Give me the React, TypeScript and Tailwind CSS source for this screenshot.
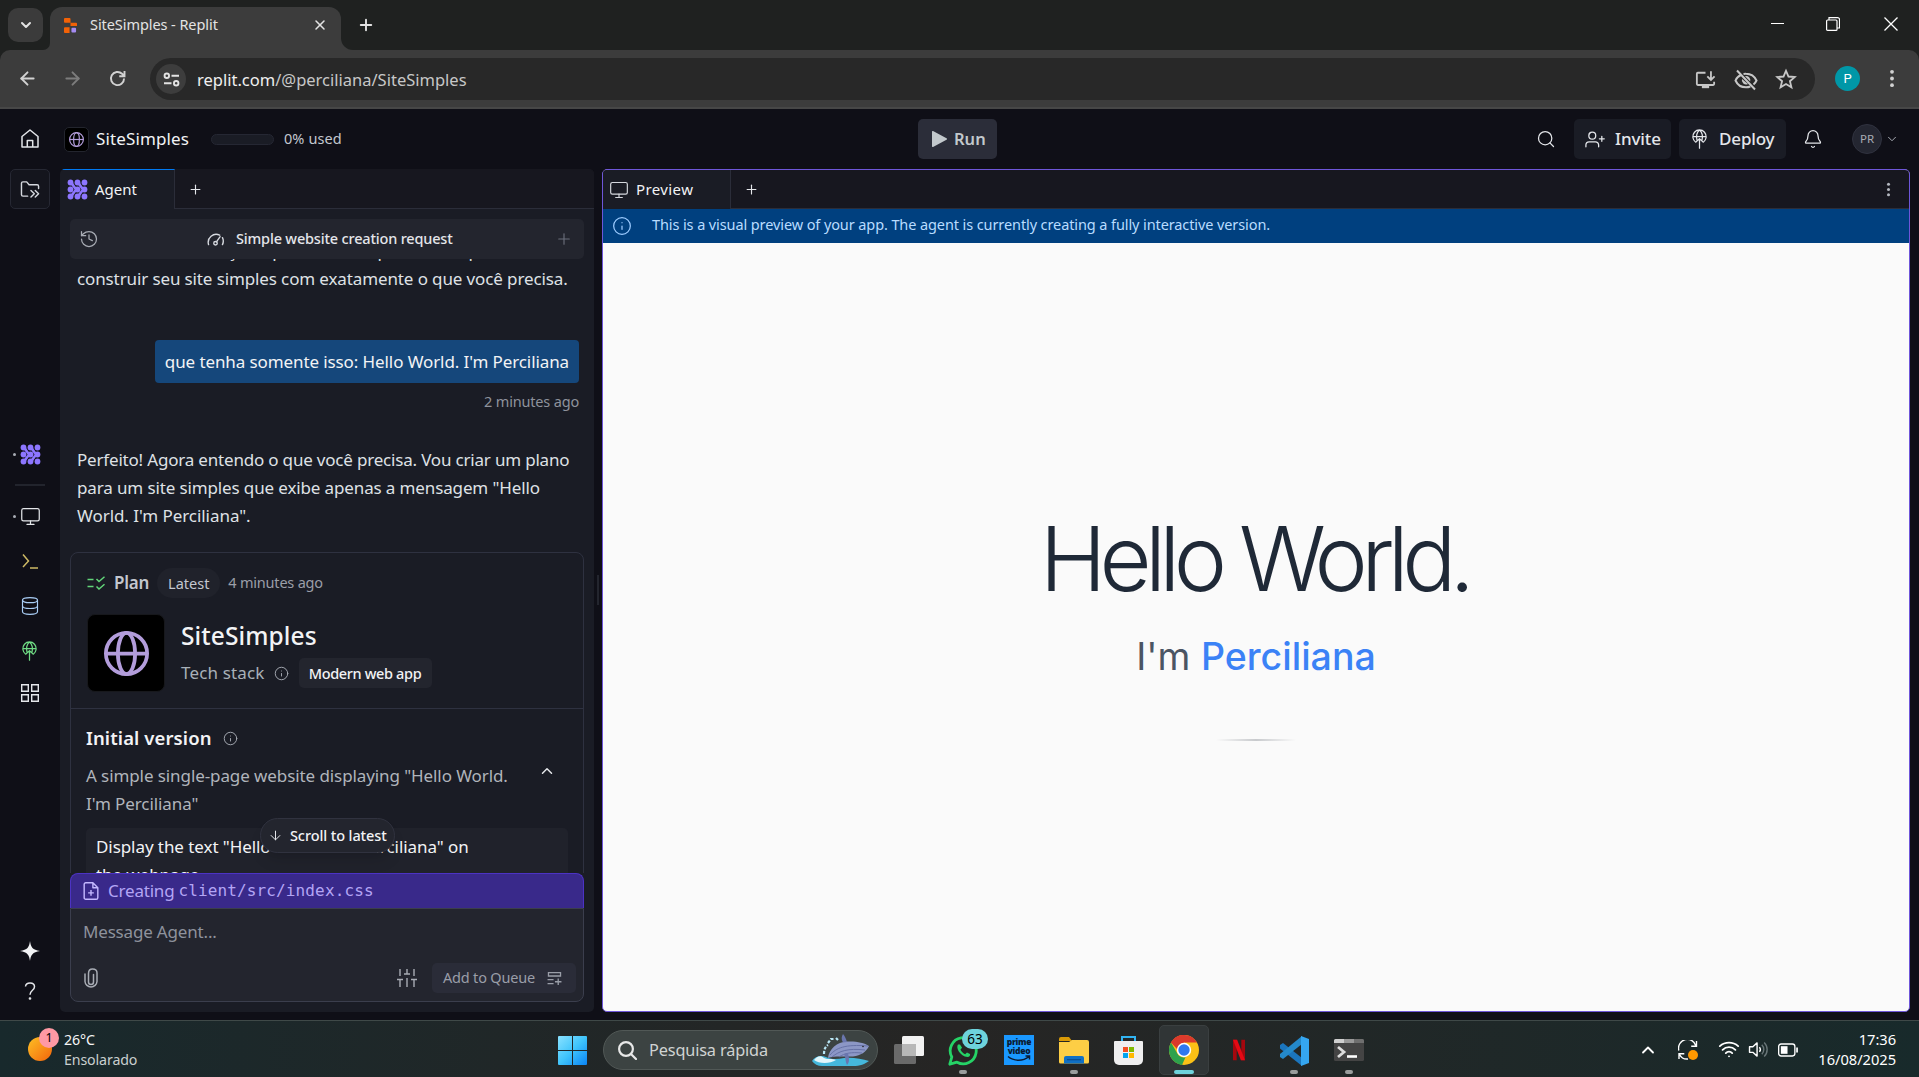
import React from "react";
import {
  ArrowDown,
  ArrowLeft,
  ArrowRight,
  Bell,
  ChevronDown,
  ChevronUp,
  Database,
  History,
  Info,
  Monitor,
  Plus,
  Search,
  Wifi,
  X,
} from "lucide-react";

type P = { className?: string };

function AgentIcon({ className }: P) {
  const pts = [4, 12, 20];
  return (
    <svg viewBox="0 0 24 24" className={className}>
      <g fill="#8d76ff" stroke="#8d76ff">
        {pts.map((x) => pts.map((y) => <circle key={`${x}-${y}`} cx={x} cy={y} r="3.3" stroke="none" />))}
        <path d="M4 4c4 2 3 7 8 8c-5 1-4 6-8 8M12 4c4 2 3 7 8 8c-5 1-4 6-8 8" fill="none" strokeWidth="3" />
      </g>
    </svg>
  );
}

function Globe({ className, w = 2 }: P & { w?: number }) {
  return (
    <svg viewBox="0 0 24 24" className={className} fill="none" stroke="#b39ddb" strokeWidth={w}>
      <circle cx="12" cy="12" r="11" />
      <ellipse cx="12" cy="12" rx="4.6" ry="11" />
      <path d="M1 12h22" />
    </svg>
  );
}

function DeployIcon({ className }: P) {
  return (
    <svg viewBox="0 0 20 24" className={className} fill="none" stroke="currentColor" strokeWidth="1.5" strokeLinecap="round" strokeLinejoin="round">
      <path d="M5.5 15.8A8 8 0 1 1 14.5 15.8M2 9h16M7 13.5C5.6 9 6.8 3.5 10 1.2C13.2 3.5 14.4 9 13 13.5M10 23V12M6 15.5l4-4l4 4" />
    </svg>
  );
}

function HomeIcon({ className }: P) {
  return (
    <svg viewBox="0 0 18 20" className={className} fill="none" stroke="#e4e6ea" strokeWidth="1.5" strokeLinejoin="round">
      <path d="M1 7.5L9 1l8 6.5V18H1zM6.3 18v-6.500h5.400V18" />
    </svg>
  );
}

function FolderIcon({ className }: P) {
  return (
    <svg viewBox="0 0 22 20" className={className} fill="none" stroke="#d5d8de" strokeWidth="1.5" strokeLinejoin="round" strokeLinecap="round">
      <path d="M8 17H3a1.500 1.500 0 0 1-1.500-1.500v-12A1.500 1.500 0 0 1 3 2h4l2.500 3H18a1.500 1.500 0 0 1 1.500 1.500V9M11.500 11l3.500 3.500-3.500 3.500M16 11l3.500 3.500L16 18" />
    </svg>
  );
}

function DotsV({ className }: P) {
  return (
    <svg viewBox="0 0 6 20" className={className} fill="currentColor">
      <circle cx="3" cy="3" r="2" />
      <circle cx="3" cy="10" r="2" />
      <circle cx="3" cy="17" r="2" />
    </svg>
  );
}

function TabStrip() {
  return (
    <div className="flex h-[50px] shrink-0 bg-[#1f2120]">
      <div className="mt-2 ml-2 flex h-[34px] w-[35px] items-center justify-center rounded-[10px] bg-[#3b3b3b]">
        <ChevronDown className="size-[16px] text-[#e3e3e3]" strokeWidth={3} />
      </div>
      <div className="flex w-[7px] items-end bg-[#3c3c3c]">
        <div className="h-[50px] w-[7px] rounded-br-[10px] bg-[#1f2120]" />
      </div>
      <div className="mt-[7px] flex h-[43px] w-[291px] items-center rounded-t-[12px] bg-[#3c3c3c]">
        <svg viewBox="0 0 14 16" className="mt-[-7px] ml-3.5 h-[15px] w-[13px]">
          <path d="M0 1a1 1 0 0 1 1-1h5a1 1 0 0 1 1 1v4H1a1 1 0 0 1-1-1zM7 5h6a1 1 0 0 1 1 1v2.500H7zM0 11a1 1 0 0 1 1-1h5v6H1a1 1 0 0 1-1-1z" fill="#f26207" />
          <rect x="8" y="10.5" width="5" height="5" rx="1" fill="#a48bf2" />
        </svg>
        <div className="mt-[-7px] ml-[13px] text-[14.5px] tracking-[-0.07px] text-[#e3e3e3]">SiteSimples - Replit</div>
        <X className="mt-[-7px] mr-[13px] ml-auto size-[16px] text-[#e3e3e3]" strokeWidth={2.3} />
      </div>
      <div className="w-[12px] bg-[#3c3c3c]">
        <div className="h-[50px] w-[12px] rounded-bl-[12px] bg-[#1f2120]" />
      </div>
      <Plus className="mt-[16px] ml-[4px] size-[18px] text-[#e3e3e3]" strokeWidth={2.5} />
      <div className="ml-auto flex items-start pt-[17px]">
        <div className="mt-[6px] mr-[42px] h-px w-[13px] bg-white" />
        <svg viewBox="0 0 14 14" className="mr-[44px] size-[14px]" fill="none" stroke="#fff" strokeWidth="1.2">
          <rect x="0.6" y="3" width="10.4" height="10.4" rx="1" />
          <path d="M3 3V.6h8.500a2 2 0 0 1 2 2V11H11" />
        </svg>
        <svg viewBox="0 0 14 14" className="mr-[21px] size-[14px]" stroke="#fff" strokeWidth="1.3">
          <path d="M.5.5l13 13M13.5.5l-13 13" />
        </svg>
      </div>
    </div>
  );
}

function Toolbar() {
  return (
    <div className="h-[59px] shrink-0 bg-[#1f2120]">
      <div className="flex h-[59px] items-start rounded-t-[10px] border-b-2 border-[#474747] bg-[#3c3c3c] pt-2">
        <ArrowLeft className="mt-[10px] ml-[17px] size-[21px] text-[#d2d2d2]" strokeWidth={2.2} />
        <ArrowRight className="mt-[10px] ml-[24px] size-[21px] text-[#7c7c7c]" strokeWidth={2.2} />
        <svg viewBox="0 0 24 24" className="mt-[10px] ml-[24px] size-[21px]" fill="none" stroke="#d2d2d2" strokeWidth="2.2">
          <path d="M19.500 12a7.500 7.500 0 1 1-2.300-5.400L20 9.300M20 3.500v6h-6" />
        </svg>
        <div className="ml-[22px] flex h-[42px] w-[1665px] items-center rounded-full bg-[#282828] pr-[18px]">
          <div className="ml-[6px] flex size-[30px] items-center justify-center rounded-full bg-[#3d3d3d]">
            <svg viewBox="0 0 18 16" className="h-[15px] w-[17px]" fill="none" stroke="#e3e3e3" strokeWidth="2">
              <circle cx="4" cy="4" r="2.4" />
              <path d="M9 4h8M1 12h8" />
              <circle cx="14" cy="12" r="2.4" />
            </svg>
          </div>
          <div className="mt-[2px] ml-[11px] text-[16.5px] text-[#c7c7c7]">
            <span className="text-[#f0f0f0]">replit.com</span>/@perciliana/SiteSimples
          </div>
          <svg viewBox="0 0 24 22" className="mt-px mr-[17px] ml-auto h-[20px] w-[23px]" fill="none" stroke="#c7c7c7" strokeWidth="2">
            <path d="M12 3H3.500A1 1 0 0 0 2.500 4v11.500a1 1 0 0 0 1 1h17a1 1 0 0 0 1-1V13M18 1.500v9M14 7l4 4l4-4" />
            <path d="M8 17h8v3H8z" fill="#c7c7c7" stroke="none" />
          </svg>
          <svg viewBox="0 0 24 22" className="mt-px mr-[17px] h-[22px] w-[24px]" fill="none" stroke="#c7c7c7" strokeWidth="2">
            <path d="M7 6C4.500 7 2.500 9 1.500 11.500C3.500 16 7.500 18.300 12 18.300c1.500 0 3-.3 4.300-.8M9.500 4.900A12 12 0 0 1 12 4.700c4.500 0 8.500 2.500 10.500 6.800a11 11 0 0 1-3 4M3 1.500l18 19" />
            <path d="M8 10a4.200 4.200 0 0 0 6 5zM11 7.300a4.200 4.200 0 0 1 5.200 5.200z" fill="#c7c7c7" stroke="none" />
          </svg>
          <svg viewBox="0 0 24 24" className="size-[22px]" fill="none" stroke="#c7c7c7" strokeWidth="2">
            <path d="M12 3l2.700 6.300l6.800.6l-5.200 4.500l1.600 6.700L12 17.500l-5.900 3.600l1.600-6.700l-5.200-4.500l6.800-.6z" />
          </svg>
        </div>
        <div className="mt-[8px] ml-[20px] flex size-[25px] items-center justify-center rounded-full bg-[#0097a7] font-[Roboto] text-[13px] text-white">P</div>
        <DotsV className="mt-[11px] ml-[29px] h-[19px] w-[6px] text-[#d2d2d2]" />
      </div>
    </div>
  );
}

function AppHeader() {
  return (
    <div className="flex h-[60px] shrink-0 items-center">
      <div className="flex w-[918px] items-center">
        <HomeIcon className="ml-[21px] h-[20px] w-[18px]" />
        <div className="ml-[25px] flex size-[25px] items-center justify-center rounded-[5px] border border-[#23252e] bg-black">
          <Globe className="size-[15px]" w={1.9} />
        </div>
        <div className="ml-[7px] text-[17px] tracking-[0.12px] text-[#f2f3f5]">SiteSimples</div>
        <div className="ml-[22px] h-[11px] w-[63px] rounded-full border border-[#252733] bg-[#1a1c25]" />
        <div className="ml-[10px] text-[14.5px] tracking-[0.12px] text-[#c3c7cf]">0% used</div>
      </div>
      <div className="flex h-10 w-[79px] items-center rounded-[5px] bg-[#2b2d39] text-[#c2c8cc]">
        <svg viewBox="0 0 15 16" className="ml-[14px] h-[16px] w-[15px]" fill="currentColor">
          <path d="M0 1a1 1 0 0 1 1.500-.8l13 7a1 1 0 0 1 0 1.600l-13 7A1 1 0 0 1 0 15z" />
        </svg>
        <div className="ml-[7px] text-[16.5px] font-semibold">Run</div>
      </div>
      <div className="ml-auto flex items-center text-[#e4e6ea]">
        <Search className="mr-[18px] size-[20px]" strokeWidth={1.5} />
        <div className="mr-2 flex h-10 w-[97px] items-center rounded-[5px] bg-[#1a1c25]">
          <svg viewBox="0 0 22 18" className="ml-[11px] h-[17px] w-[20px]" fill="none" stroke="currentColor" strokeWidth="1.4" strokeLinecap="round">
            <circle cx="8" cy="4.8" r="3.8" />
            <path d="M1 17v-2a3.500 3.500 0 0 1 3.500-3.500h7A3.500 3.500 0 0 1 15 15v2M18.500 5.500v5.500M15.800 8.200h5.400" />
          </svg>
          <div className="ml-[10px] text-[17px] font-medium tracking-[-0.1px]">Invite</div>
        </div>
        <div className="mr-[17px] flex h-10 w-[107px] items-center rounded-[5px] bg-[#1a1c25]">
          <DeployIcon className="ml-[12px] h-[20px] w-[17px]" />
          <div className="ml-[11px] text-[17px] font-medium tracking-[-0.15px]">Deploy</div>
        </div>
        <Bell className="mr-[29px] size-[20px]" strokeWidth={1.5} />
        <div className="flex size-[30px] items-center justify-center rounded-full border border-[#30323f] bg-[#242631] text-[11.5px] text-[#a8acb4]">PR</div>
        <ChevronDown className="mr-[20px] ml-[3px] size-[14px] text-[#a8acb4]" strokeWidth={1.7} />
      </div>
    </div>
  );
}

function SideRail() {
  return (
    <div className="flex w-[60px] shrink-0 flex-col items-center">
      <div className="flex h-10 w-10 items-center justify-center rounded-[5px] border border-[#262833] bg-[#14151d]">
        <FolderIcon className="h-[19px] w-[21px]" />
      </div>
      <div className="mt-[235px] mr-[6px] flex items-center gap-[4px]">
        <div className="size-[3px] rounded-full bg-[#a8acb4]" />
        <AgentIcon className="size-[21px]" />
      </div>
      <div className="mt-[19px] h-[2px] w-[30px] bg-[#22242d]" />
      <div className="mt-[20px] mr-[6px] flex items-center gap-[4px]">
        <div className="size-[3px] rounded-full bg-[#a8acb4]" />
        <Monitor className="size-[21px] text-[#e4e6ea]" strokeWidth={1.4} />
      </div>
      <svg viewBox="0 0 16 16" className="mt-[26px] mr-px size-[16px]" fill="none" stroke="#cdb965" strokeWidth="1.5">
        <path d="M1 1.500L6.500 8L1 14M8 15h8" />
      </svg>
      <Database className="mt-[27px] size-[20px] text-[#a9cdf5]" strokeWidth={1.4} />
      <DeployIcon className="mt-[25px] mr-px h-[20px] w-[17px] text-[#6fdb84]" />
      <svg viewBox="0 0 18 18" className="mt-[23px] size-[18px]" fill="none" stroke="#e4e6ea" strokeWidth="1.4">
        <path d="M.7.7h6.600v6.600H.7zM10.7.7h6.600v6.600h-6.600zM.7 10.700h6.600v6.600H.7zM10.700 10.700h6.600v6.600h-6.600z" />
      </svg>
      <svg viewBox="0 0 20 20" className="mt-[239px] size-[20px]" fill="#f2f3f5">
        <path d="M10 0c.8 6 2.500 9 10 10c-7.500 1-9.200 4-10 10c-.8-6-2.500-9-10-10C7.500 9 9.200 6 10 0z" />
      </svg>
      <svg viewBox="0 0 12 18" className="mt-[21px] h-[18px] w-[12px]" fill="none" stroke="#e4e6ea" strokeWidth="1.5">
        <path d="M1.500 4.500C1.800 2.300 3.500 1 6 1c2.700 0 4.500 1.500 4.500 3.800C10.500 8.500 6 8 6 12.800" />
        <circle cx="6" cy="16.5" r=".6" fill="#e4e6ea" />
      </svg>
    </div>
  );
}

function PlanCard() {
  return (
    <div className="mt-[22px] h-[400px] rounded-[8px] border border-[#2e3140]">
      <div className="h-[156px] border-b border-[#2e3140] pt-[15px]">
        <div className="flex h-[30px] items-center">
          <svg viewBox="0 0 18 14" className="ml-[16px] h-[14px] w-[18px]" fill="none" stroke="#62d67a" strokeWidth="1.5">
            <path d="M.5 3.500h6M.5 10.500h6M9.500 3l2.500 2.500L17.500.8M9.500 10.500l2.500 2.500l5.500-4.700" />
          </svg>
          <div className="ml-[9px] text-[17px] font-semibold tracking-[-0.2px] text-[#c3c7cf]">Plan</div>
          <div className="ml-[8px] flex h-[30px] w-[63px] items-center justify-center rounded-full bg-[#20222b] pt-px text-[14.5px] text-[#c3c7cf]">Latest</div>
          <div className="ml-[8px] text-[14.5px] tracking-[-0.2px] text-[#9a9ea8]">4 minutes ago</div>
        </div>
        <div className="mt-4 flex">
          <div className="ml-[16px] flex size-[78px] items-center justify-center rounded-[8px] border border-[#17181c] bg-black">
            <Globe className="size-[45px]" w={2} />
          </div>
          <div className="ml-[16px]">
            <div className="h-[44px] text-[24.5px] leading-[44px] font-medium tracking-[0.1px] text-[#f2f3f5]">SiteSimples</div>
            <div className="flex h-[30px] items-center">
              <div className="text-[17px] tracking-[0.15px] text-[#a8b0b8]">Tech stack</div>
              <Info className="ml-[9px] size-[15px] text-[#a8acb4]" strokeWidth={1.5} />
              <div className="ml-[10px] flex h-[30px] w-[133px] items-center justify-center rounded-[5px] bg-[#23252e] pt-px text-[14.5px] font-medium tracking-[-0.35px] text-[#f2f3f5]">Modern web app</div>
            </div>
          </div>
        </div>
      </div>
      <div className="mt-[15px] flex h-[28px] items-center">
        <div className="ml-[15px] text-[18.5px] font-semibold tracking-[0.1px] text-[#f2f3f5]">Initial version</div>
        <Info className="ml-[11px] size-[15px] text-[#a8acb4]" strokeWidth={1.5} />
      </div>
      <div className="mt-[10px] ml-[15px] flex justify-between text-[17px] leading-[28px] tracking-[-0.09px] text-[#b0b4bb]">
        <div>
          A simple single-page website displaying "Hello World.
          <br />
          I'm Perciliana"
        </div>
        <ChevronUp className="mr-[27px] size-[18px] text-[#e4e6ea]" strokeWidth={2} />
      </div>
      <div className="mx-[15px] mt-[10px] h-[90px] rounded-[5px] bg-[#20222b] pt-[5px] pl-[10px] text-[17px] leading-[28px] tracking-[-0.07px] text-[#f2f3f5]">
        Display the text "Hello World. I'm Perciliana" on
        <br />
        the webpage
      </div>
    </div>
  );
}

function Composer() {
  return (
    <div className="relative mx-[10px] mb-[10px] flex h-[129px] shrink-0 flex-col">
      <div className="absolute -top-[55px] left-[190px] flex h-[35px] w-[135px] items-center rounded-full border border-[#30323f] bg-[#23252e] shadow-lg">
        <ArrowDown className="ml-[7px] size-[15px] text-[#e4e6ea]" strokeWidth={1.6} />
        <div className="ml-[7px] text-[14.5px] font-medium tracking-[-0.1px] whitespace-nowrap text-[#f2f3f5]">Scroll to latest</div>
      </div>
      <div className="flex h-[35px] items-center rounded-t-[8px] border border-b-0 border-[#4c33c4] bg-[#39298a] text-[#b3a5f5]">
        <svg viewBox="0 0 16 19" className="ml-[12px] h-[18px] w-[16px]" fill="none" stroke="#c4b8ff" strokeWidth="1.5" strokeLinejoin="round">
          <path d="M10 .8H2.500A1.700 1.700 0 0 0 .8 2.500v14a1.700 1.700 0 0 0 1.700 1.700h11a1.700 1.700 0 0 0 1.700-1.700V6zM10 .8V6h5.200M8 8.500v6M5 11.500h6" />
        </svg>
        <div className="ml-[9px] text-[17px] tracking-[-0.2px]">Creating</div>
        <div className="ml-[4px] font-['DejaVu_Sans_Mono'] text-[16px] tracking-[0.13px]">client/src/index.css</div>
      </div>
      <div className="flex h-[94px] flex-col rounded-b-[8px] border border-[#3b3e4d] bg-[#23252e]">
        <div className="mt-[9px] ml-[12px] text-[17px] leading-[28px] tracking-[-0.18px] text-[#8e929c]">Message Agent...</div>
        <div className="mt-[17px] flex h-[30px] items-center text-[#9a9ea8]">
          <svg viewBox="0 0 14 20" className="ml-[13px] h-[20px] w-[14px]" fill="none" stroke="#a8acb4" strokeWidth="1.5" strokeLinecap="round">
            <path d="M9.500 6.500V14a2.500 2.500 0 0 1-5 0V5.500C4.500 2.500 6 1 8.500 1S13 2.500 13 5v8.500A6 6 0 0 1 7 19a6 6 0 0 1-6-5.500V6" />
          </svg>
          <svg viewBox="0 0 20 20" className="mr-[15px] ml-auto size-[20px]" fill="none" stroke="#a8acb4" strokeWidth="1.4">
            <path d="M3 1v7M0 11.500h6M3 11.500V19M10 1v5M7 6h6M10 10v9M17 1v7M14 11.500h6M17 11.500V19" />
          </svg>
          <div className="mr-[7px] flex h-[30px] w-[144px] items-center rounded-[5px] bg-[#2a2c38]">
            <div className="ml-[11px] text-[14.5px] tracking-[-0.19px]">Add to Queue</div>
            <svg viewBox="0 0 16 14" className="ml-[12px] h-[13px] w-[15px]" fill="none" stroke="currentColor" strokeWidth="1.4">
              <path d="M1.500.7h13v3.600h-13zM.5 8.200h6.500M.5 12.500h6.500M12 7v7M8.500 10.500h7" />
            </svg>
          </div>
        </div>
      </div>
    </div>
  );
}

function AgentPanel() {
  return (
    <div className="flex h-[843px] w-[534px] shrink-0 flex-col overflow-hidden rounded-[5px] bg-[#1a1c25]">
      <div className="flex h-10 shrink-0">
        <div className="flex w-[115px] items-center border-t border-r border-t-[#0079f2] border-r-[#2b2d39]">
          <AgentIcon className="ml-[7px] size-[21px]" />
          <div className="ml-[7px] text-[15px] text-[#f2f3f5]">Agent</div>
        </div>
        <div className="flex flex-1 items-center border-b border-[#2b2d39] bg-[#17171f]">
          <Plus className="mt-px ml-[13px] size-[15px] text-[#e4e6ea]" strokeWidth={1.8} />
        </div>
      </div>
      <div className="z-10 mx-[10px] mt-[10px] flex h-10 shrink-0 items-center rounded-[5px] bg-[#23252e]">
        <History className="ml-[9px] size-[20px] text-[#a8acb4]" strokeWidth={1.5} />
        <svg viewBox="0 0 20 14" className="ml-[107px] h-[13px] w-[19px]" fill="none" stroke="#d5d8de" strokeWidth="1.5" strokeLinecap="round">
          <path d="M2.500 12.500A8.600 8.600 0 0 1 14.500 2.400M17.500 5a8.600 8.600 0 0 1 0 7.500M15 4l-4 5.500" />
          <circle cx="10" cy="11" r="1.9" />
        </svg>
        <div className="ml-[11px] text-[14.5px] font-medium tracking-[-0.18px] text-[#e4e6ea]">Simple website creation request</div>
        <Plus className="mr-[11px] ml-auto size-[18px] text-[#6b6f7b]" strokeWidth={1.5} />
      </div>
      <div className="min-h-0 flex-1 overflow-hidden px-[10px] text-[#dfe1e5]">
        <div className="-mt-[22px] pl-[7px] text-[17px] leading-[28px] tracking-[-0.12px] whitespace-nowrap">
          Com essas informações, posso criar o plano ideal para
          <br />
          construir seu site simples com exatamente o que você precisa.
        </div>
        <div className="mt-[47px] mr-[5px] flex justify-end">
          <div className="flex h-[43px] items-center rounded-[4px] bg-[#15477b] px-[10px] text-[17px] tracking-[-0.1px] text-[#f2f3f5]">que tenha somente isso: Hello World. I'm Perciliana</div>
        </div>
        <div className="mt-[8px] mr-[5px] text-right text-[14.5px] leading-[20px] tracking-[-0.18px] text-[#8e929c]">2 minutes ago</div>
        <div className="mt-[35px] pl-[7px] text-[17px] leading-[28px] tracking-[-0.19px] whitespace-nowrap">
          Perfeito! Agora entendo o que você precisa. Vou criar um plano
          <br />
          <span className="tracking-[-0.13px]">para um site simples que exibe apenas a mensagem "Hello</span>
          <br />
          <span className="tracking-[-0.05px]">World. I'm Perciliana".</span>
        </div>
        <PlanCard />
      </div>
      <Composer />
    </div>
  );
}

function PreviewPanel() {
  return (
    <div className="flex h-[843px] flex-1 flex-col overflow-hidden rounded-[5px] border border-[#6e56d9] bg-[#fafafa]">
      <div className="flex h-[39px] shrink-0 bg-[#17171f]">
        <div className="flex w-[128px] items-center border-r border-[#2b2d39] bg-[#1a1c25]">
          <Monitor className="ml-[6px] size-[20px] text-[#d5d8de]" strokeWidth={1.4} />
          <div className="ml-[7px] text-[15px] tracking-[0.4px] text-[#f2f3f5]">Preview</div>
        </div>
        <div className="flex flex-1 items-center border-b border-[#2b2d39]">
          <Plus className="ml-[13px] size-[15px] text-[#e4e6ea]" strokeWidth={1.8} />
          <DotsV className="mr-[18px] ml-auto h-[15px] w-[5px] text-[#b4b8c0]" />
        </div>
      </div>
      <div className="flex h-[34px] shrink-0 items-center bg-[#00407f] text-[#b8dcff]">
        <Info className="mb-px ml-[9px] size-[20px] text-[#9ccbff]" strokeWidth={1.5} />
        <div className="mb-[3px] ml-[20px] text-[14.5px] tracking-[-0.1px]">This is a visual preview of your app. The agent is currently creating a fully interactive version.</div>
      </div>
      <div className="flex flex-1 flex-col items-center font-[Inter]">
        <div className="mt-[271px] ml-[-4px] h-[90px] text-[90px] leading-[90px] font-light tracking-[-6.7px] text-[#1f2937]">Hello World.</div>
        <div className="mt-[28px] h-[50px] text-[37.5px] leading-[50px] text-[#4b5563]">
          I'm <span className="font-medium text-[#3b82f6]">Perciliana</span>
        </div>
        <div className="mt-[57px] h-[2px] w-[80px] bg-linear-to-r from-transparent via-[#c8cacd] to-transparent" />
      </div>
    </div>
  );
}

function Pip({ className }: P) {
  return <div className={`absolute bottom-[3px] left-1/2 h-[4px] -translate-x-1/2 rounded-full ${className}`} />;
}

function Taskbar() {
  return (
    <div className="flex h-[57px] shrink-0 items-stretch border-t border-[#3f4948] bg-linear-to-r from-[#18292c] via-[#262524] via-50% to-[#182a2b] font-['Noto_Sans'] text-[#f5f5f5]">
      <div className="flex w-[558px] pl-[27px]">
        <div className="relative mt-[10px] h-[34px] w-[32px]">
          <div className="absolute top-[6px] left-px size-[24px] rounded-full bg-linear-to-br from-[#fbbf24] to-[#f2620b]" />
          <div className="absolute -top-[3px] left-[12px] flex size-[20px] items-center justify-center rounded-full bg-[#ff99a4] text-[12.5px] text-black">1</div>
        </div>
        <div className="mt-[9px] ml-[5px] text-[14.2px] leading-[20px] tracking-[-0.12px]">
          26°C
          <div className="text-[#c9cfcf]">Ensolarado</div>
        </div>
      </div>
      <svg viewBox="0 0 29 29" className="mt-[15px] size-[29px]">
        <defs>
          <linearGradient id="win" x1="0" y1="0" x2="1" y2="1">
            <stop offset="0" stopColor="#8ae2ff" />
            <stop offset=".5" stopColor="#3fc4fb" />
            <stop offset="1" stopColor="#0a84f5" />
          </linearGradient>
        </defs>
        <path d="M0 1a1 1 0 0 1 1-1h13v14H0zM15 0h13a1 1 0 0 1 1 1v13H15zM0 15h14v14H1a1 1 0 0 1-1-1zM15 15h14v13a1 1 0 0 1-1 1H15z" fill="url(#win)" />
      </svg>
      <div className="mt-[9px] ml-[16px] flex h-[40px] w-[275px] items-center rounded-full border border-[#515856] bg-[#3c4342]">
        <svg viewBox="0 0 19 19" className="ml-[14px] size-[19px]" fill="none" stroke="#e8e8e8" strokeWidth="2.2" strokeLinecap="round">
          <circle cx="8" cy="8" r="6.9" />
          <path d="M13 13l5 5" />
        </svg>
        <div className="mt-px ml-[12px] text-[16.3px] tracking-[-0.15px] text-[#d0d3d2]">Pesquisa rápida</div>
        <svg viewBox="0 0 58 32" className="mr-[7px] ml-auto h-[32px] w-[58px]">
          <path d="M0 27c3-5 9-6 14-4c6 3 12 2 18 1c8-1 18 1 25 3c-4 3-9 5-16 5H10c-4 0-8-2-10-5z" fill="#45b8dc" />
          <path d="M2 26c3-4 7-5 10-2c4 2 8 0 12 2c-6 4-17 4-22 0z" fill="#e2f6fb" />
          <path d="M16 24c1-9 9-16 19-16.500c9-.5 17 1 22 4.500c-3 6-8 9.500-16 10.500c-8 .5-18-1-25 1.500z" fill="#8c97c6" />
          <path d="M18 21c6-7 15-11 38-9M20 23c7-6 16-9 33-7M27 23c6-4 12-5 23-4" fill="none" stroke="#626da3" strokeWidth=".9" />
          <path d="M31 8.500c-2-3-1.500-6 0-8.500c2 2 3 5 4 8zM32 20c2 4 1 7 3 11c3-3 2-7 1-12z" fill="#6a76ae" />
          <path d="M12 20c0-4 1-7 4-9M16 9l3-4l4 0M24 4l2 2" fill="none" stroke="#b9e6f5" strokeWidth="2.2" strokeDasharray="3 1.5" />
          <circle cx="51" cy="12.500" r=".8" fill="#222" />
        </svg>
      </div>
      <svg viewBox="0 0 30 28" className="mt-[15px] ml-[16px] h-[28px] w-[30px]">
        <rect x="8" y="0" width="22" height="20" rx="1.5" fill="#f2f2f2" />
        <rect x="0" y="8" width="22" height="20" rx="1.5" fill="#7c7c7c" fillOpacity=".8" />
        <path d="M8 8h14v12H8z" fill="#b8b8b8" />
      </svg>
      <div className="relative ml-[24px] w-[30px]">
        <svg viewBox="0 0 30 30" className="mt-[15px] size-[30px]" fill="none" stroke="#25d366" strokeWidth="2.8">
          <path d="M1.800 28.200l2-7.200A13 13 0 1 1 9 26.200z" strokeLinejoin="round" />
          <path d="M10 8.500c-2.500 3 2 12 9.500 12.500c2 0 3-1.500 2.500-3l-3-1.500l-1.800 1.700c-2-.7-4-2.600-4.700-4.700l1.600-1.700L12 8.500z" fill="#25d366" stroke="none" />
        </svg>
        <div className="absolute top-[8px] left-[14px] flex h-[20px] w-[26px] items-center justify-center rounded-full bg-[#6ed3dc] text-[13.5px] text-black">63</div>
        <Pip className="w-[8px] bg-[#9a9d9d]" />
      </div>
      <div className="mt-[14px] ml-[26px] size-[30px] bg-[#1a98ff] pt-[2px] text-center font-['Open_Sans'] text-[8.5px] leading-[9px] font-extrabold tracking-[-0.3px] text-[#0b1b33]">
        <div>prime</div>
        <div>video</div>
        <svg viewBox="0 0 24 7" className="mx-auto h-[7px] w-[24px]" fill="none" stroke="#0b1b33" strokeWidth="1.5">
          <path d="M1 1.500c6 5 15 5 21 0M18.500 1h4v3.500" />
        </svg>
      </div>
      <div className="relative ml-[25px] w-[30px]">
        <svg viewBox="0 0 30 27" className="mt-[16px] h-[27px] w-[30px]">
          <path d="M0 2a2 2 0 0 1 2-2h8l3 4H0z" fill="#d99a07" />
          <path d="M0 5h10l3-2h15a2 2 0 0 1 2 2v20a1.500 1.500 0 0 1-1.500 1.500h-27A1.500 1.500 0 0 1 0 25z" fill="#fdce45" />
          <path d="M5 26.500V21a2 2 0 0 1 2-2h16a2 2 0 0 1 2 2v5.500z" fill="#1070c4" />
          <path d="M8 22.700h14" stroke="#0a4c8f" strokeWidth="1.2" />
        </svg>
        <Pip className="w-[8px] bg-[#9a9d9d]" />
      </div>
      <svg viewBox="0 0 29 29" className="mt-[15px] ml-[25px] size-[29px]">
        <path d="M8 5V1h13v4" fill="none" stroke="#31b4f2" strokeWidth="2" />
        <path d="M0 6a1 1 0 0 1 1-1h27a1 1 0 0 1 1 1v18a5 5 0 0 1-5 5H5a5 5 0 0 1-5-5z" fill="#efefef" />
        <path d="M9 11h5v5H9z" fill="#f25022" />
        <path d="M15 11h5v5h-5z" fill="#7fba00" />
        <path d="M9 17h5v5H9z" fill="#00a4ef" />
        <path d="M15 17h5v5h-5z" fill="#ffb900" />
      </svg>
      <div className="relative mt-[4px] ml-[16px] h-[50px] w-[50px] rounded-[5px] border border-[#3a3f40] bg-[#303536]">
        <svg viewBox="0 0 30 30" className="mt-[9px] ml-[9px] size-[30px]">
          <circle cx="15" cy="15" r="15" fill="#fbc116" />
          <path d="M2 7.500A15 15 0 0 1 28 7.500H15z" fill="#db3a2c" />
          <path d="M2 7.500l6.500 11.200A7.500 7.500 0 0 0 15 22.500l1.500-.2L13 29.900A15 15 0 0 1 2 7.500z" fill="#2da24c" />
          <path d="M2 7.500a15 15 0 0 1 13-7.500v8.500a6.500 6.500 0 0 0-6.500 6z" fill="#db3a2c" />
          <circle cx="15" cy="15" r="7.2" fill="#fff" />
          <circle cx="15" cy="15" r="5.7" fill="#2f78ee" />
        </svg>
        <div className="absolute bottom-0 left-[14px] h-[4px] w-[20px] rounded-full bg-[#6ed3dc]" />
      </div>
      <svg viewBox="0 0 13 22" className="mt-[18px] ml-[24px] h-[22px] w-[12px]">
        <path d="M0 0h4v22H0zM9 0h4v22H9z" fill="#a5070e" />
        <path d="M0 0h4.500L13 22H8.500z" fill="#e50914" />
      </svg>
      <div className="relative ml-[34px] w-[30px]">
        <svg viewBox="0 0 30 30" className="mt-[15px] size-[30px]">
          <path d="M1 9l3-2l19 15v8L1 12.500z" fill="#1b75bd" />
          <path d="M1 21l3 2L23 8V0L1 18z" fill="#2489ca" />
          <path d="M22 0l8 3v24l-8 3z" fill="#35a6f0" />
        </svg>
        <Pip className="w-[8px] bg-[#9a9d9d]" />
      </div>
      <div className="relative ml-[25px] w-[30px]">
        <svg viewBox="0 0 30 22" className="mt-[18px] h-[22px] w-[30px]">
          <rect width="30" height="22" rx="1.5" fill="#444" />
          <path d="M0 4V1.500A1.500 1.500 0 0 1 1.500 0H10v4z" fill="#cfcfcf" />
          <path d="M10 0h10v4H10z" fill="#999" />
          <path d="M20 0h8.500A1.500 1.500 0 0 1 30 1.500V4H20z" fill="#6f6f6f" />
          <path d="M4 8l6 5l-6 5" fill="none" stroke="#ddd" strokeWidth="2.8" />
          <path d="M13 17.500h10" stroke="#fff" strokeWidth="2.6" />
        </svg>
        <Pip className="w-[8px] bg-[#9a9d9d]" />
      </div>
      <div className="ml-auto flex">
        <ChevronUp className="mt-[19px] size-[20px] text-white" strokeWidth={2.2} />
        <svg viewBox="0 0 20 20" className="mt-[19px] ml-[20px] size-[20px]" fill="none" stroke="#fff" strokeWidth="1.4">
          <path d="M.8 10.500A8.500 8.500 0 0 1 18 6M18.500 1v5.300h-5.300M1 19v-5.300h5.300M1.500 14.500A8.500 8.500 0 0 0 10 19" />
          <circle cx="15" cy="15" r="5" fill="#ff9800" stroke="none" />
        </svg>
        <Wifi className="mt-[17px] ml-[20px] size-[22px] text-white" strokeWidth={2} />
        <svg viewBox="0 0 21 18" className="mt-[20px] ml-[8px] h-[17px] w-[21px]" fill="none" stroke="#fff" strokeWidth="1.5">
          <path d="M1 6h3.500L9 2v14l-4.500-4H1zM11.500 6.500a4 4 0 0 1 0 5" strokeLinejoin="round" />
          <path d="M14 4a7 7 0 0 1 0 10M16.500 1.500a10.500 10.500 0 0 1 0 15" stroke="#687577" />
        </svg>
        <svg viewBox="0 0 21 14" className="mt-[22px] ml-[9px] h-[14px] w-[20px]" fill="none" stroke="#fff" strokeWidth="1.4">
          <rect x=".7" y=".7" width="17" height="12.6" rx="2.5" />
          <path d="M3 3h7v8H3z" fill="#fff" stroke="none" />
          <path d="M20 4.500v5" strokeWidth="1.8" />
        </svg>
        <div className="mt-[8px] mr-[23px] w-[98px] text-right text-[14.7px] leading-[20px] tracking-[-0.05px] text-white">
          17:36
          <br />
          16/08/2025
        </div>
      </div>
    </div>
  );
}

export default function App() {
  return (
    <div className="flex h-[1077px] w-[1919px] flex-col overflow-hidden bg-[#0f0f17] font-['Noto_Sans','Open_Sans',sans-serif]">
      <TabStrip />
      <Toolbar />
      <AppHeader />
      <div className="flex h-[851px] shrink-0">
        <SideRail />
        <AgentPanel />
        <div className="flex w-[8px] shrink-0 items-start justify-center">
          <div className="mt-[406px] h-[30px] w-[2px] bg-[#23252e]" />
        </div>
        <PreviewPanel />
        <div className="w-[9px] shrink-0" />
      </div>
      <Taskbar />
    </div>
  );
}
